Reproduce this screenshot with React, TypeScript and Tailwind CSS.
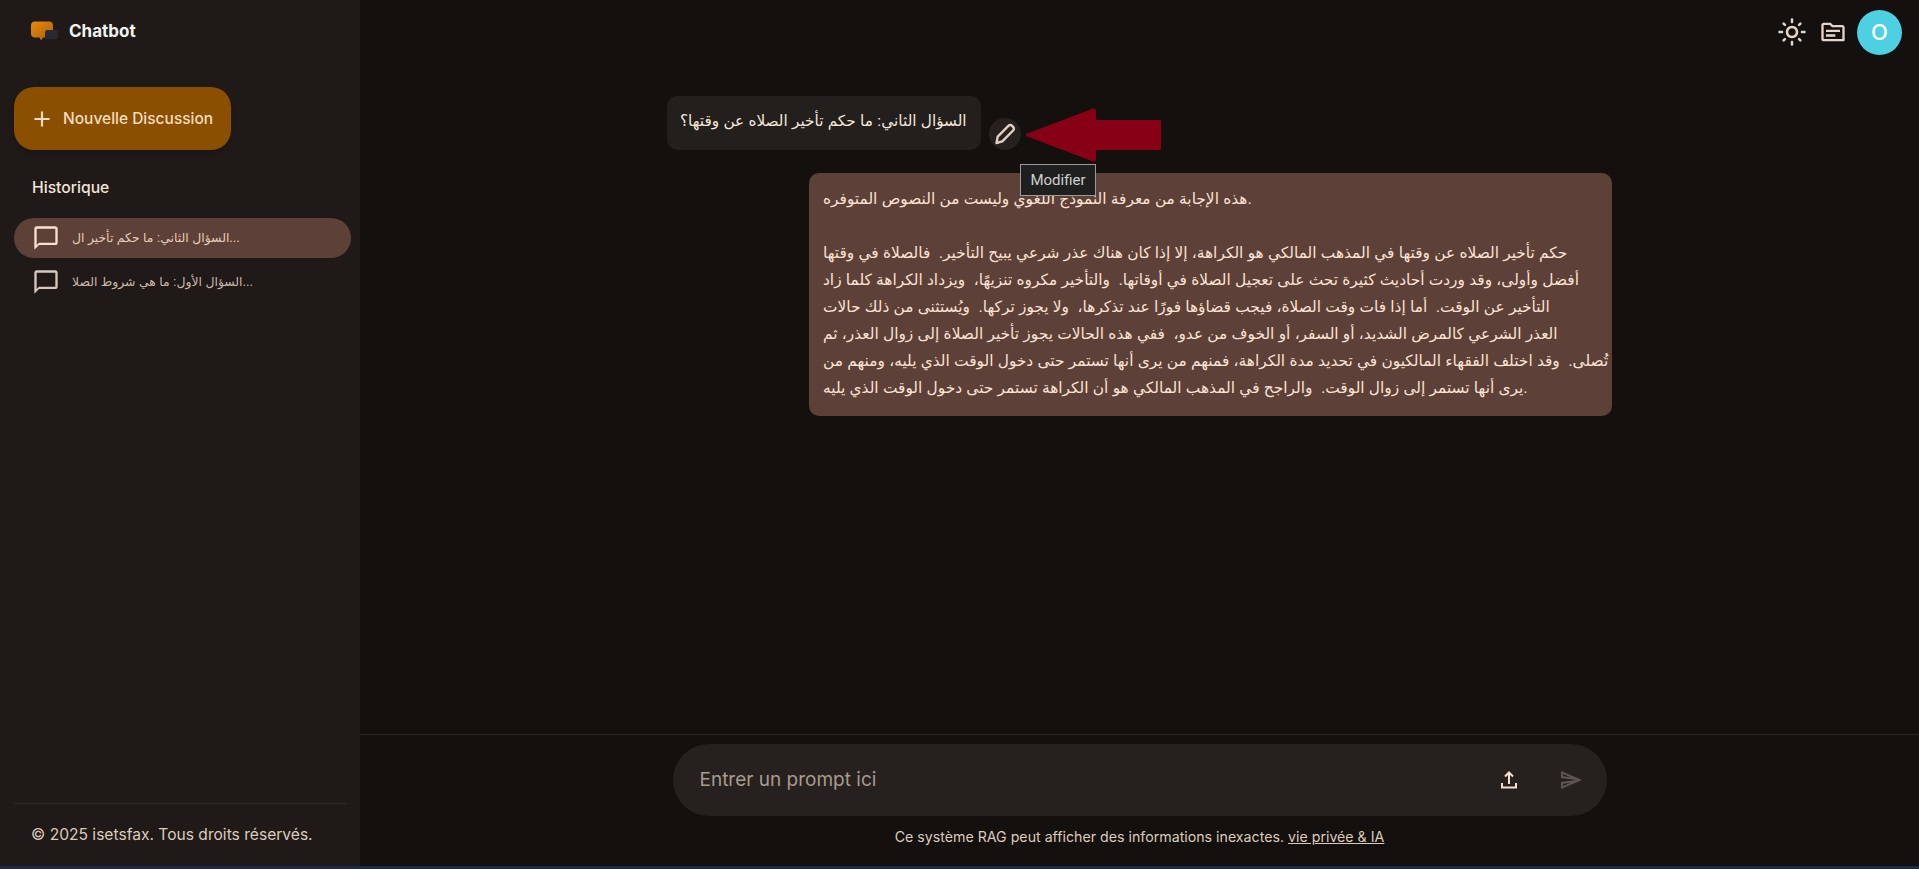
import { MdAdd, MdOutlineChatBubbleOutline, MdOutlineLightMode, MdOutlineTopic, MdOutlineSend } from "react-icons/md";

const answerLines = [
  "هذه الإجابة من معرفة النموذج اللغوي وليست من النصوص المتوفره.",
  "\u00a0",
  "حكم تأخير الصلاه عن وقتها في المذهب المالكي هو الكراهة، إلا إذا كان هناك عذر شرعي يبيح التأخير.  فالصلاة في وقتها",
  "أفضل وأولى، وقد وردت أحاديث كثيرة تحث على تعجيل الصلاة في أوقاتها.  والتأخير مكروه تنزيهًا،  ويزداد الكراهة كلما زاد",
  "التأخير عن الوقت.  أما إذا فات وقت الصلاة، فيجب قضاؤها فورًا عند تذكرها،  ولا يجوز تركها.  ويُستثنى من ذلك حالات",
  "العذر الشرعي كالمرض الشديد، أو السفر، أو الخوف من عدو،  ففي هذه الحالات يجوز تأخير الصلاة إلى زوال العذر، ثم",
  "تُصلى.  وقد اختلف الفقهاء المالكيون في تحديد مدة الكراهة، فمنهم من يرى أنها تستمر حتى دخول الوقت الذي يليه، ومنهم من",
  "يرى أنها تستمر إلى زوال الوقت.  والراجح في المذهب المالكي هو أن الكراهة تستمر حتى دخول الوقت الذي يليه.",
];

function Logo() {
  return (
    <svg width="28" height="22" viewBox="0 0 28 22">
      <defs>
        <linearGradient id="logoGrad" x1="0" y1="0" x2="1" y2="1">
          <stop offset="0" stopColor="#e8890c" />
          <stop offset="1" stopColor="#a8620f" />
        </linearGradient>
      </defs>
      <path d="M4 0.500h14a4 4 0 0 1 4 4v7a5 5 0 0 1-5 5h-5l-2 3-1.500-3H4a4 4 0 0 1-4-4v-8a4 4 0 0 1 4-4z" fill="url(#logoGrad)" />
      <path d="M16 9h8a2.500 2.500 0 0 1 2.500 2.500V18H14v-6.500A2.500 2.500 0 0 1 16 9z" fill="#2a2a33" />
    </svg>
  );
}

function PencilIcon() {
  return (
    <svg width="24" height="24" viewBox="0 0 24 24" fill="none" stroke="#e0cfc2" strokeWidth="2.400" strokeLinejoin="round">
      <path d="M15.400 3.800a2.600 2.600 0 0 1 3.700 0l1 1a2.600 2.600 0 0 1 0 3.700L9.300 19.300 3.500 21l1.200-6.300z" />
    </svg>
  );
}

function UploadIcon() {
  return (
    <svg width="24" height="24" viewBox="0 0 24 24" fill="none" stroke="#f3e0d2" strokeWidth="2">
      <path d="M12 16V5M8 8.500 12 4.500l4 4" />
      <path d="M5 15v4.500h14V15" />
    </svg>
  );
}

function Sidebar() {
  return (
    <aside className="w-[360px] shrink-0 bg-[#1f1a17] flex flex-col px-[14px] text-[#f0dccd]">
      <div className="h-[64px] pl-[17px] flex items-center gap-[10px]">
        <Logo />
        <span className="text-[17px] font-bold text-[#f2f2f2]">Chatbot</span>
      </div>
      <button className="mt-[23px] w-[217px] h-[63px] rounded-[20px] bg-[#8a4f00] flex items-center gap-[8px] pl-[15px] shadow-md text-[#f7dcc0]">
        <MdAdd size={26} />
        <span className="text-[15.500px] font-medium">Nouvelle Discussion</span>
      </button>
      <div className="mt-[28px] pl-[18px] h-[20px] leading-[20px] text-[15.700px] font-medium text-[#f2e4da]">Historique</div>
      <div className="mt-[20px] flex flex-col gap-[4px] w-[337px]">
        <div className="h-[40px] rounded-full bg-[#5d4037] flex items-center pl-[18px] gap-[12px]">
          <MdOutlineChatBubbleOutline size={28} className="text-[#fbdfd0]" />
          <span className="text-[12.400px] text-[#e8cdbb] font-['Liberation_Sans','DejaVu_Sans',sans-serif]">السؤال الثاني: ما حكم تأخير ال...</span>
        </div>
        <div className="h-[40px] rounded-full flex items-center pl-[18px] gap-[12px]">
          <MdOutlineChatBubbleOutline size={28} className="text-[#d9c8bc]" />
          <span className="text-[12.400px] text-[#cdb9ab] font-['Liberation_Sans','DejaVu_Sans',sans-serif]">السؤال الأول: ما هي شروط الصلا...</span>
        </div>
      </div>
      <div className="mt-auto w-[333px] border-t border-[#2e2926] h-[63px] pl-[17px] pt-[21px] text-[15.600px] leading-[20px] text-[#dccbbd]">
        © 2025 isetsfax. Tous droits réservés.
      </div>
    </aside>
  );
}

function Chat() {
  return (
    <div className="flex-1 min-h-0 w-[945px] mx-auto flex flex-col font-['Liberation_Sans','DejaVu_Sans',sans-serif]">
      <div className="relative mt-[32px] flex items-start">
        <div className="w-[314px] h-[54px] rounded-[10px] bg-[#231f1c] text-[15.300px] leading-[27px] text-[#f5e6da] px-[13px] pt-[11px] whitespace-nowrap">
          السؤال الثاني: ما حكم تأخير الصلاه عن وقتها؟
        </div>
        <div className="ml-[8px] mt-[22px] w-[32px] h-[32px] rounded-full bg-[#26211e] flex items-center justify-center">
          <PencilIcon />
        </div>
        {/* red arrow annotation drawn on the screenshot */}
        <svg className="absolute left-[359px] top-[12px]" width="136" height="54" viewBox="0 0 136 54">
          <path d="M0 26 L67 0.500 Q70 0 70 3 L70 12 L134 12 Q135 12 135 13 L135 41 Q135 42 134 42 L70 42 L70 51 Q70 54 67 53.500 L0 28 Z" fill="#880015" />
        </svg>
        <div className="absolute left-[353px] top-[68px] z-10 h-[32px] w-[76px] bg-[#1f1f1f] border border-[#9a9a9a] text-[#cfcfcf] text-[15px] leading-[30px] text-center font-['Roboto',sans-serif]">
          Modifier
        </div>
      </div>
      <div className="mt-[23px] self-end w-[803px] h-[243px] rounded-[10px] bg-[#5d4037] px-[14px] pt-[12px] text-[15.400px] leading-[27px] text-[#fbe3d4] whitespace-pre overflow-hidden">
        {answerLines.map((line, i) => (
          <div key={i}>{line}</div>
        ))}
      </div>
    </div>
  );
}

function Composer() {
  return (
    <div className="shrink-0 h-[132px] border-t border-[#2a2522] flex flex-col items-center">
      <div className="mt-[9px] w-[934px] h-[72px] rounded-full bg-[#26211e] flex items-center pl-[27px] pr-[24px]">
        <span className="flex-1 text-[19px] text-[#a89a8e]">Entrer un prompt ici</span>
        <UploadIcon />
        <MdOutlineSend size={24} className="ml-[38px] text-[#5e5650]" />
      </div>
      <div className="mt-[12px] text-[14.200px] leading-[18px] text-[#dccbbd]">
        Ce système RAG peut afficher des informations inexactes. <span className="underline">vie privée &amp; IA</span>
      </div>
    </div>
  );
}

export default function App() {
  return (
    <div className="h-[869px] overflow-hidden bg-[#14100e] flex flex-col font-['Inter',sans-serif]">
      <div className="flex-1 min-h-0 flex">
        <Sidebar />
        <main className="relative flex-1 min-w-0 flex flex-col">
          <header className="h-[64px] shrink-0 flex items-center justify-end pr-[17px] text-[#e6d5c8]">
            <MdOutlineLightMode size={30} className="-translate-x-px" />
            <MdOutlineTopic size={28} className="ml-[11px]" />
            <div className="ml-[10px] w-[45px] h-[45px] rounded-full bg-[#4dd0e1] flex items-center justify-center text-white text-[22px] font-medium">O</div>
          </header>
          <Chat />
          <Composer />
        </main>
      </div>
      <div className="h-[3px] shrink-0 bg-[#1c2a4a]" />
    </div>
  );
}
